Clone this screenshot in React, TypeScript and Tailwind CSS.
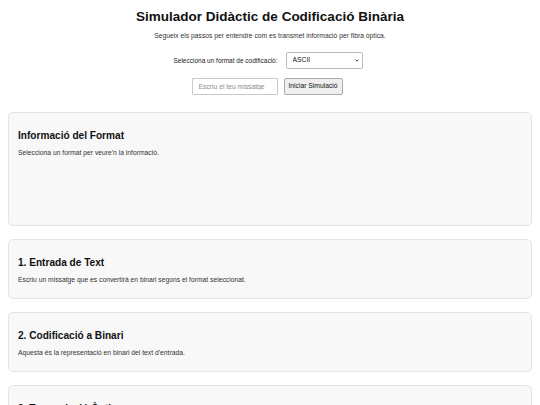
import { useState } from "react";

const STEPS = [
  {
    title: "1. Entrada de Text",
    text: "Escriu un missatge que es convertirà en binari segons el format seleccionat.",
  },
  {
    title: "2. Codificació a Binari",
    text: "Aquesta és la representació en binari del text d'entrada.",
  },
  {
    title: "3. Transmissió Òptica",
    text: "Els bits es transmeten com a polsos de llum a través de la fibra.",
  },
  {
    title: "4. Descodificació",
    text: "El receptor converteix els polsos de llum de nou en text.",
  },
];

function Card({ title, text, tall }: { title: string; text: string; tall?: boolean }) {
  return (
    <div
      className={
        "rounded-[5px] border border-[#e4e4e4] bg-[#f8f8f8] px-[9px] pt-[17px] pb-[14px] " +
        (tall ? "min-h-[114px]" : "")
      }
    >
      <h2 className="text-[10.1px] leading-[12px] font-bold text-[#111]">{title}</h2>
      <p className="mt-[7px] text-[6.75px] leading-[8px] text-[#333]">{text}</p>
    </div>
  );
}

export default function App() {
  const [format, setFormat] = useState("ASCII");
  const [msg, setMsg] = useState("");

  return (
    <div className="min-h-screen bg-white font-['Liberation_Sans',Arial,sans-serif] text-[#222]">
      <div className="px-2 pt-[9px] pb-6">
        <h1 className="text-center text-[13.5px] leading-[16px] font-bold text-[#111]">
          Simulador Didàctic de Codificació Binària
        </h1>
        <p className="mt-[6.5px] text-center text-[6.75px] leading-[8px] text-[#333]">
          Segueix els passos per entendre com es transmet informació per fibra òptica.
        </p>

        <div className="mt-[12.5px] flex items-center justify-center gap-[8px] pr-[4px]">
          <label className="text-[6.5px] leading-[8px] text-[#222]">Selecciona un format de codificació:</label>
          <div className="relative h-[17px] w-[77px]">
            <select
              value={format}
              onChange={(e) => setFormat(e.target.value)}
              className="block h-[17px] w-[77px] appearance-none rounded-[2px] border border-[#bdbdbd] bg-white pl-[6px] text-[6.75px] text-[#111] outline-none"
            >
              <option>ASCII</option>
              <option>UTF-8</option>
              <option>Unicode</option>
            </select>
            <svg
              className="pointer-events-none absolute right-[4px] top-[7px]"
              width="4"
              height="3"
              viewBox="0 0 4 3"
            >
              <path d="M0.5 0.6 L2 2.2 L3.5 0.6" fill="none" stroke="#333" strokeWidth="0.9" />
            </svg>
          </div>
        </div>

        <div className="mt-[9px] flex items-center justify-center gap-[6px] pr-[6px]">
          <input
            value={msg}
            onChange={(e) => setMsg(e.target.value)}
            placeholder="Escriu el teu missatge"
            className="block h-[16.5px] w-[86px] rounded-[1px] border border-[#c8c8c8] bg-white px-[6px] text-[6.75px] text-[#111] outline-none placeholder:text-[#8a8a8a]"
          />
          <button className="block h-[16.5px] w-[59px] rounded-[2px] border border-[#a9a9a9] bg-[#efefef] text-[6.75px] text-[#111]">
            Iniciar Simulació
          </button>
        </div>

        <div className="mt-[17.5px] flex flex-col gap-[13px]">
          <Card title="Informació del Format" text="Selecciona un format per veure'n la informació." tall />
          {STEPS.map((s) => (
            <Card key={s.title} title={s.title} text={s.text} />
          ))}
        </div>
      </div>
    </div>
  );
}
